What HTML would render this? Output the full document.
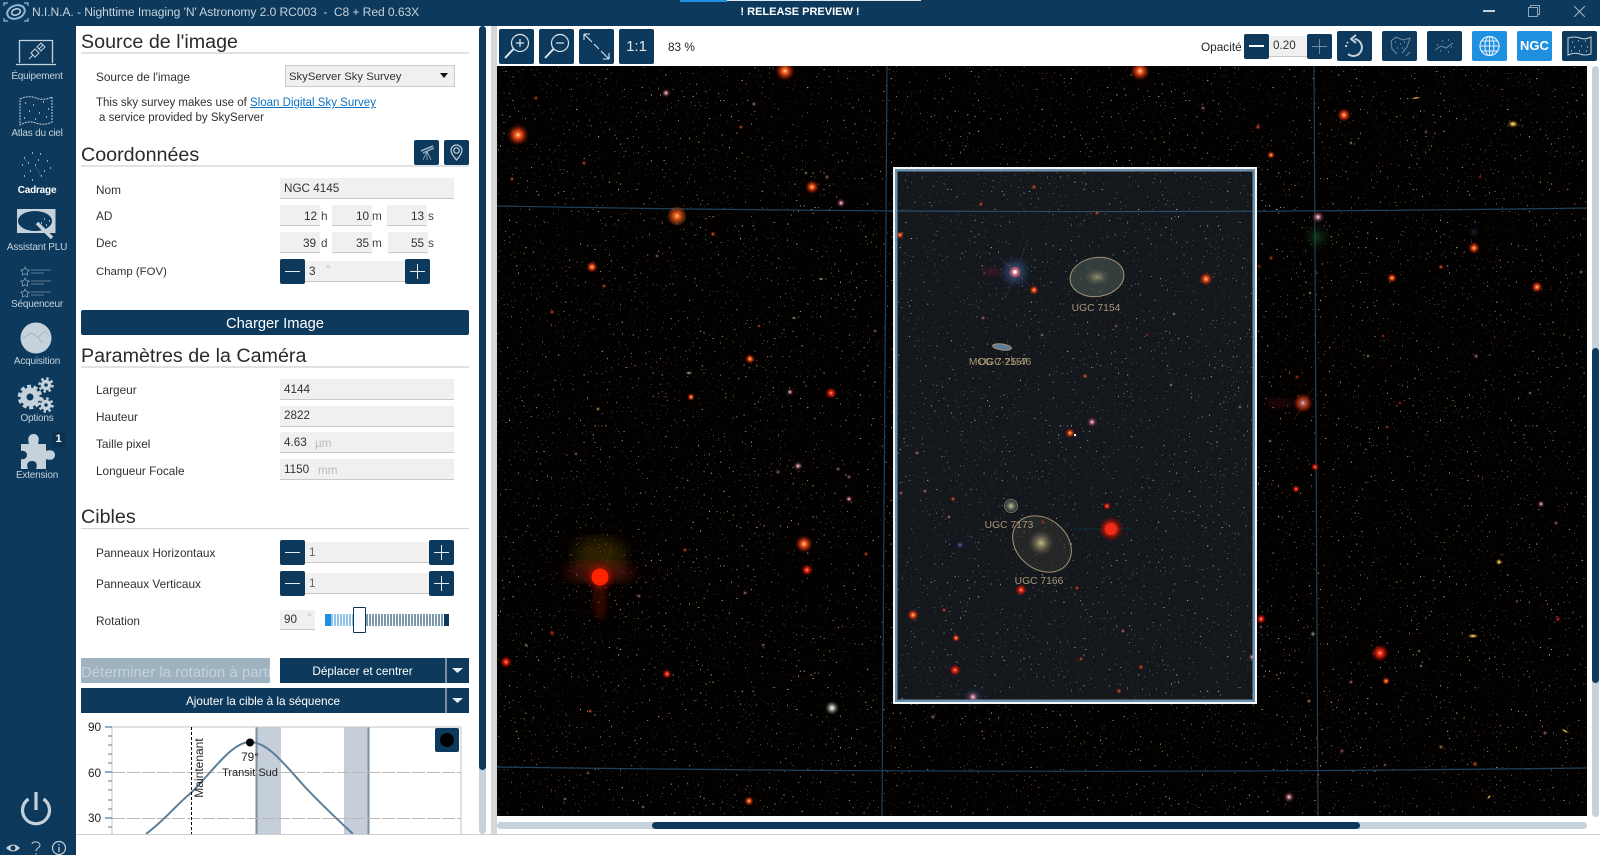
<!DOCTYPE html>
<html lang="fr"><head><meta charset="utf-8"><title>N.I.N.A.</title>
<style>
html,body{margin:0;padding:0;width:1600px;height:855px;overflow:hidden;background:#fff}
body{position:relative;font-family:"Liberation Sans",sans-serif;font-size:11.8px;color:#2a2a2a}
div,span,svg,a{position:absolute;display:block;box-sizing:border-box;white-space:pre}
.d{background:#0d3a5c}
.h{left:81px;font-size:19.7px;line-height:26px;height:26px;color:#2a2a2a;font-weight:400}
.r{left:81px;width:388px;height:2px;background:#e2e2e2}
.l{left:96px;line-height:16px;height:16px;color:#303030}
.i{background:#f0f0f0;border-bottom:1px solid #c8c8c8;line-height:21px;color:#333;padding-left:4px;font-size:11.7px}
.v{line-height:16px;height:16px;color:#333}
.u{line-height:16px;height:16px;color:#444}
.g{color:#bbb}
.b{background:#0d3a5c;border-radius:2px}
.s{width:76px;left:-1px;text-align:center;color:#c5d1db;font-size:10px;line-height:13px;height:13px;letter-spacing:-.2px}
.t{color:#222;line-height:14px;height:14px}
.c{text-align:center}
circle[r="2"],circle[r="2.500"],circle[r="3"],circle[r="1.800"]{opacity:.62}
</style></head><body>

<!-- title bar -->
<div class="d" style="left:0;top:0;width:1600px;height:26px"></div>
<div style="left:680px;top:0;width:47px;height:2px;background:#1f8fe0"></div>
<div style="left:727px;top:0;width:194px;height:1px;background:#dfe6ec"></div>
<svg style="left:2px;top:1px" width="28" height="22" viewBox="0 0 28 22" fill="none" stroke="#c5d1db">
<path d="M2 5V2H6M22 2H26V5M2 17V20H6M22 20H26V17" stroke-width="1"/>
<ellipse cx="14" cy="11" rx="9" ry="6.500" transform="rotate(-20 14 11)" stroke="#8fb8d8" stroke-width="2"/>
<ellipse cx="14" cy="11" rx="4.500" ry="3" transform="rotate(-20 14 11)" stroke="#c5d1db" stroke-width="1.500"/></svg>
<div style="left:32px;top:4px;color:#c5d1db;font-size:12.1px;line-height:16px;letter-spacing:-.08px">N.I.N.A. - Nighttime Imaging 'N' Astronomy 2.0 RC003  -  C8 + Red 0.63X</div>
<div class="c" style="left:700px;top:4px;width:200px;color:#fff;font-size:11px;font-weight:700;line-height:16px">! RELEASE PREVIEW !</div>
<div style="left:1483px;top:10px;width:12px;height:2px;background:#c5d1db"></div>
<svg style="left:1528px;top:5px" width="12" height="12" fill="none" stroke="#8fa6b8"><path d="M.5 2.500H9.500V11.500H.5ZM2.500 2.500V.5H11.500V9.500H9.500"/></svg>
<svg style="left:1574px;top:6px" width="11" height="11" stroke="#a9bac7"><path d="M0 0L11 11M11 0L0 11"/></svg>

<!-- sidebar -->
<div class="d" style="left:0;top:26px;width:76px;height:829px"></div>
<svg style="left:0;top:26px" width="76" height="829" viewBox="0 26 76 829" fill="none" stroke="#c5d1db">
<path d="M19.500 63V40.500H52.500V63M16 64.500H56" stroke-width="1.300"/>
<path d="M29 59L33 55M43 45L39 49M31 53L35 49L39 53L35 57ZM37 47L41 43L45 47L41 51Z" stroke-width="1"/>
<path d="M20 99Q28 95 36 98T52 97V122Q44 126 36 123T20 125Z" stroke-width="1" stroke-dasharray="2 1"/>
<path d="M25 103h1M33 105h1M43 102h1M29 111h1M39 113h1M48 109h1M24 118h1M35 119h1M46 117h1" stroke-width="1.500"/>
<path d="M32 153h1M24 158h1M40 154h1M22 165h1M35 165h1M47 161h1M30 171h1M41 176h1M24 176h1M32 180h1M50 168h1M38 160h1M28 163h1M44 171h1" stroke-width="1.500" stroke="#c5d1db"/>
<path d="M24 158L28 163M35 165L41 176" stroke-width=".4" stroke="#6f8ca2"/>
<rect x="17" y="209" width="38.500" height="24" fill="#c5d1db" stroke="none"/>
<ellipse cx="35" cy="221" rx="17" ry="10" fill="#0d3a5c" stroke="none"/>
<path d="M37 223L52 238" stroke-width="3.500" stroke="#c5d1db"/>
<path d="M41 223h1M46 225h1M49 221h1M44 219h1" stroke-width="1.500"/>
<path d="M25 267l1.300 2.700 3 .4-2.100 2 .5 3-2.700-1.400-2.700 1.400.5-3-2.100-2 3-.4ZM25 278l1.300 2.700 3 .4-2.100 2 .5 3-2.700-1.400-2.700 1.400.5-3-2.100-2 3-.4ZM25 289l1.300 2.700 3 .4-2.100 2 .5 3-2.700-1.400-2.700 1.400.5-3-2.100-2 3-.4Z" stroke-width=".6" stroke="#a9bac7"/>
<path d="M31 270H51M31 273H44M31 281H51M31 284H44M31 292H51M31 295H44" stroke-width=".6" stroke="#a9bac7"/>
<circle cx="36" cy="338" r="15.500" fill="#c5d1db" stroke="none"/>
<path d="M23 338L31 333L38 337L45 331L49 336M38 337L42 343" stroke="#8fa6b8" stroke-width=".6"/>
<circle cx="30" cy="397" r="6.500" stroke-width="6"/><circle cx="30" cy="397" r="10.500" stroke-width="3.500" stroke-dasharray="4 2.600"/>
<circle cx="46" cy="385" r="3.500" stroke-width="3.500"/><circle cx="46" cy="385" r="6.500" stroke-width="2.500" stroke-dasharray="2.500 2.600"/>
<circle cx="46" cy="405" r="3.500" stroke-width="3.500"/><circle cx="46" cy="405" r="6.500" stroke-width="2.500" stroke-dasharray="2.500 2.600"/>
<path d="M21 444H29C27 438 29 434 33.500 434S40 438 38 444H46V451C51 449 55 451 55 455S51 461 46 459V469H36C38 464 36 461 32 461S26 464 28 469H21V459C24 460 27 458 27 455S24 450 21 451Z" fill="#c5d1db" stroke="none"/>
<path d="M28.500 799A13.500 13.500 0 1 0 43.500 799" stroke-width="3.200" stroke="#c5d1db"/><path d="M36 792V810" stroke-width="3.200"/>
<path d="M6 848Q13 841 20 848Q13 855 6 848Z" fill="#c5d1db" stroke="none"/><circle cx="13" cy="848" r="2.500" fill="#0d3a5c" stroke="none" style="opacity:1"/>
<path d="M32 844C32 841 40 841 40 845C40 848 36 848 36 851M36 853V854.500" stroke-width="1"/>
<circle cx="59" cy="848" r="6.500" stroke-width="1.200"/><path d="M59 847V852M59 844V845.500" stroke-width="1.300"/>
</svg>
<div class="s" style="top:70px">Équipement</div>
<div class="s" style="top:127px">Atlas du ciel</div>
<div class="s" style="top:184px;color:#fff;font-weight:700">Cadrage</div>
<div class="s" style="top:241px">Assistant PLU</div>
<div class="s" style="top:298px">Séquenceur</div>
<div class="s" style="top:355px">Acquisition</div>
<div class="s" style="top:412px">Options</div>
<div class="s" style="top:469px">Extension</div>
<div style="left:52px;top:432px;width:13px;height:15px;background:#0a3150;color:#fff;font-weight:700;font-size:11px;line-height:15px;text-align:center">1</div>

<!-- panel -->
<div class="h" style="top:29px">Source de l'image</div>
<div class="r" style="top:52px"></div>
<div class="l" style="top:69px">Source de l'image</div>
<div style="left:285px;top:65px;width:170px;height:22px;background:#f0f0f0;border:1px solid #ccc;line-height:23px;padding-left:3px;color:#333;font-size:11.3px">SkyServer Sky Survey</div>
<svg style="left:439px;top:73px" width="10" height="6"><path d="M1 0H9L5 5Z" fill="#111"/></svg>
<div class="l" style="top:95px;font-size:11.5px">This sky survey makes use of <span style="position:static;display:inline;color:#0b72c4;text-decoration:underline">Sloan Digital Sky Survey</span></div>
<div class="l" style="top:110px;left:99px;font-size:11.5px">a service provided by SkyServer</div>

<div class="h" style="top:142px">Coordonnées</div>
<div class="r" style="top:165px"></div>
<div class="b" style="left:414px;top:140px;width:25px;height:25px"></div>
<svg style="left:414px;top:140px" width="25" height="25" fill="none" stroke="#9fb2bf"><path d="M7 11L19 6M9 13L20 8" stroke-width="1.500"/><path d="M13 11L9 20M13 11V20M13 11L17 20" stroke-width=".8"/></svg>
<div class="b" style="left:444px;top:140px;width:25px;height:25px"></div>
<svg style="left:444px;top:140px" width="25" height="25" fill="none" stroke="#c5d1db" stroke-width="1.200"><path d="M12.500 20C9 16 7 13 7 10.500A5.500 5.500 0 0 1 18 10.500C18 13 16 16 12.500 20Z"/><circle cx="12.500" cy="10.500" r="2.800"/></svg>

<div class="l" style="top:182px">Nom</div>
<div class="i" style="left:280px;top:178px;width:174px;height:21px;line-height:22px">NGC 4145</div>
<div class="l" style="top:208px">AD</div>
<div class="i" style="left:280px;top:205px;width:40px;height:21px"></div><div class="i" style="left:332px;top:205px;width:40px;height:21px"></div><div class="i" style="left:387px;top:205px;width:40px;height:21px"></div>
<div class="v" style="left:304px;top:208px">12</div><div class="u" style="left:321px;top:208px">h</div>
<div class="v" style="left:356px;top:208px">10</div><div class="u" style="left:372px;top:208px">m</div>
<div class="v" style="left:411px;top:208px">13</div><div class="u" style="left:428px;top:208px">s</div>
<div class="l" style="top:235px">Dec</div>
<div class="i" style="left:280px;top:232px;width:40px;height:21px"></div><div class="i" style="left:332px;top:232px;width:40px;height:21px"></div><div class="i" style="left:388px;top:232px;width:40px;height:21px"></div>
<div class="v" style="left:303px;top:235px">39</div><div class="u" style="left:321px;top:235px">d</div>
<div class="v" style="left:356px;top:235px">35</div><div class="u" style="left:372px;top:235px">m</div>
<div class="v" style="left:411px;top:235px">55</div><div class="u" style="left:428px;top:235px">s</div>
<div class="l" style="top:264px;font-size:11.4px">Champ (FOV)</div>
<div class="i" style="left:305px;top:261px;width:100px;height:21px">3<span class="g" style="left:21px;top:-2px">°</span></div>
<div class="b" style="left:280px;top:259px;width:25px;height:25px"></div><div style="left:285px;top:271px;width:15px;height:1px;background:#e6ecf0"></div>
<div class="b" style="left:405px;top:259px;width:25px;height:25px"></div><div style="left:410px;top:271px;width:15px;height:1px;background:#e6ecf0"></div><div style="left:417px;top:264px;width:1px;height:15px;background:#e6ecf0"></div>

<div class="b c" style="left:81px;top:310px;width:388px;height:25px;color:#fff;font-size:14.7px;line-height:29px">Charger Image</div>
<div class="h" style="top:343px">Paramètres de la Caméra</div>
<div class="r" style="top:366px"></div>
<div class="l" style="top:382px">Largeur</div><div class="i" style="left:280px;top:379px;width:174px;height:21px">4144</div>
<div class="l" style="top:409px">Hauteur</div><div class="i" style="left:280px;top:406px;width:174px;height:21px;line-height:19px">2822</div>
<div class="l" style="top:436px">Taille pixel</div><div class="i" style="left:280px;top:432px;width:174px;height:21px">4.63<span class="g" style="left:35px;top:1px">µm</span></div>
<div class="l" style="top:463px">Longueur Focale</div><div class="i" style="left:280px;top:459px;width:174px;height:21px">1150<span class="g" style="left:38px;top:1px">mm</span></div>

<div class="h" style="top:504px">Cibles</div>
<div class="r" style="top:528px;height:1px;background:#d4d4d4"></div>
<div class="l" style="top:545px">Panneaux Horizontaux</div>
<div class="i" style="left:305px;top:542px;width:124px;height:21px;color:#666">1</div>
<div class="b" style="left:280px;top:540px;width:25px;height:25px"></div><div style="left:285px;top:552px;width:15px;height:1px;background:#e6ecf0"></div>
<div class="b" style="left:429px;top:540px;width:25px;height:25px"></div><div style="left:434px;top:552px;width:15px;height:1px;background:#e6ecf0"></div><div style="left:441px;top:545px;width:1px;height:15px;background:#e6ecf0"></div>
<div class="l" style="top:576px">Panneaux Verticaux</div>
<div class="i" style="left:305px;top:573px;width:124px;height:21px;color:#666">1</div>
<div class="b" style="left:280px;top:571px;width:25px;height:25px"></div><div style="left:285px;top:583px;width:15px;height:1px;background:#e6ecf0"></div>
<div class="b" style="left:429px;top:571px;width:25px;height:25px"></div><div style="left:434px;top:583px;width:15px;height:1px;background:#e6ecf0"></div><div style="left:441px;top:576px;width:1px;height:15px;background:#e6ecf0"></div>
<div class="l" style="top:613px">Rotation</div>
<div class="i" style="left:280px;top:610px;width:35px;height:20px;line-height:19px">90<span class="g" style="left:27px;top:-2px">°</span></div>
<div style="left:325px;top:614px;width:6px;height:12px;background:#1f8fe0"></div>
<div style="left:331px;top:614px;width:24px;height:12px;background:repeating-linear-gradient(90deg,#8fc4ea 0 2px,#fff 2px 3px)"></div>
<div style="left:366px;top:614px;width:78px;height:12px;background:repeating-linear-gradient(90deg,#7d97ab 0 2px,#fff 2px 3px)"></div>
<div style="left:444px;top:614px;width:5px;height:12px;background:#0d3a5c"></div>
<div style="left:353px;top:607px;width:13px;height:26px;background:#fff;border:1px solid #0d3a5c;border-radius:1px"></div>

<div style="left:81px;top:658px;width:189px;height:25px;background:#9fb2bf;color:#c5d1db;font-size:15px;line-height:29px;overflow:hidden;border-radius:1px">Déterminer la rotation à partir</div>
<div class="d c" style="left:280px;top:658px;width:165px;height:25px;color:#fff;line-height:27px">Déplacer et centrer</div>
<div class="d" style="left:445px;top:658px;width:24px;height:25px;border-left:2px solid #7d8fa0"></div>
<svg style="left:452px;top:668px" width="12" height="6"><path d="M0 0H11L5.500 5Z" fill="#e6ecf0"/></svg>
<div class="d c" style="left:81px;top:688px;width:364px;height:25px;color:#fff;line-height:27px">Ajouter la cible à la séquence</div>
<div class="d" style="left:445px;top:688px;width:24px;height:25px;border-left:2px solid #7d8fa0"></div>
<svg style="left:452px;top:698px" width="12" height="6"><path d="M0 0H11L5.500 5Z" fill="#e6ecf0"/></svg>

<!-- chart -->
<svg style="left:80px;top:720px" width="390" height="115" viewBox="80 720 390 115" fill="none">
<rect x="256" y="727" width="25" height="107" fill="#c6cfd9"/><rect x="344" y="727" width="25" height="107" fill="#c6cfd9"/>
<rect x="255.500" y="727" width="2" height="107" fill="#7a8fa2"/><rect x="367.500" y="727" width="2" height="107" fill="#7a8fa2"/>
<path d="M112 727H461V834M112 727V834" stroke="#c4c4c4"/>
<path d="M112 772.500H461M112 818.500H461" stroke="#b9b9b9" stroke-dasharray="13 2"/>
<path d="M105 727H112M105 772H112M105 818H112" stroke="#5a7d98" stroke-width="1.200"/>
<path d="M108 736H112M108 745H112M108 754H112M108 763H112M108 781H112M108 790H112M108 800H112M108 809H112M108 827H112" stroke="#5a7d98"/>
<path d="M146 834C165 820 178 803 192 792C212 772 232 742 250 742C268 742 285 765 305 787C320 803 338 820 353 834" stroke="#5a7d98" stroke-width="2"/>
<path d="M191.500 727V834" stroke="#000" stroke-dasharray="3 2"/>
<circle cx="250" cy="742.500" r="4" fill="#000"/>
</svg>
<div style="left:88px;top:720px;line-height:14px;color:#222">90</div>
<div style="left:88px;top:766px;line-height:14px;color:#222">60</div>
<div style="left:88px;top:811px;line-height:14px;color:#222">30</div>
<div class="t" style="left:169px;top:761px;width:60px;text-align:center;transform:rotate(-90deg);font-size:12px">Maintenant</div>
<div class="t c" style="left:220px;top:750px;width:60px">79°</div>
<div class="t c" style="left:215px;top:766px;width:70px;font-size:11px">Transit Sud</div>
<div class="b" style="left:435px;top:728px;width:24px;height:24px"></div><div style="left:440px;top:733px;width:14px;height:14px;background:#000;border-radius:50%"></div>

<!-- panel scrollbar -->
<div style="left:479px;top:26px;width:7px;height:808px;background:#c5d1db;border-radius:4px"></div>
<div style="left:479px;top:26px;width:7px;height:744px;background:#0d3a5c;border-radius:4px"></div>
<div style="left:491px;top:26px;width:6px;height:808px;background:#d6d6d6"></div>

<!-- toolbar -->
<div class="b" style="left:499px;top:29px;width:35px;height:35px"></div>
<svg style="left:499px;top:29px" width="35" height="35" fill="none" stroke="#dfe6ec"><circle cx="21" cy="14" r="8.500" stroke-width="1.200"/><path d="M14.500 20L6 29" stroke-width="2"/><path d="M17 14H25M21 10V18" stroke-width="1.200"/></svg>
<div class="b" style="left:539px;top:29px;width:35px;height:35px"></div>
<svg style="left:539px;top:29px" width="35" height="35" fill="none" stroke="#dfe6ec"><circle cx="21" cy="14" r="8.500" stroke-width="1.200"/><path d="M14.500 20L6 29" stroke-width="2"/><path d="M17 14H25" stroke-width="1.200"/></svg>
<div class="b" style="left:579px;top:29px;width:35px;height:35px"></div>
<svg style="left:579px;top:29px" width="35" height="35" fill="none" stroke="#dfe6ec" stroke-width="1.100"><path d="M5 5L13 13M22 22L30 30M5 5H11M5 5V11M30 30H24M30 30V24M15 15L20 20"/></svg>
<div class="b c" style="left:619px;top:29px;width:35px;height:35px;color:#dfe6ec;font-size:15px;line-height:35px">1:1</div>
<div style="left:668px;top:39px;line-height:16px;color:#222">83 %</div>

<div style="left:1201px;top:39px;line-height:16px;color:#222">Opacité</div>
<div class="i" style="left:1269px;top:36px;width:38px;height:21px;padding-left:4px;line-height:19px">0.20</div>
<div class="b" style="left:1244px;top:34px;width:25px;height:25px"></div><div style="left:1249px;top:45px;width:15px;height:2px;background:#fff"></div>
<div class="b" style="left:1307px;top:34px;width:25px;height:25px"></div><div style="left:1312px;top:46px;width:15px;height:1px;background:#6f8ca2"></div><div style="left:1319px;top:39px;width:1px;height:15px;background:#6f8ca2"></div>
<div class="b" style="left:1337px;top:31px;width:35px;height:30px"></div>
<svg style="left:1337px;top:31px" width="35" height="30" fill="none" stroke="#c5d1db" stroke-width="2"><path d="M17.500 8A8.500 8.500 0 1 1 11 23"/><path d="M19 4L14 8L19 12" stroke-linejoin="round"/><path d="M9 16A8.500 8.500 0 0 1 11 11" stroke-dasharray="2 2"/></svg>
<div class="b" style="left:1382px;top:31px;width:35px;height:30px"></div>
<svg style="left:1382px;top:31px" width="35" height="30" fill="none" stroke="#6f8ca2"><path d="M9 10L14 6L21 9L28 7L25 16L20 22M9 10L10 18L15 23M24 25L28 21"/><path d="M13 11h1M18 13h1M22 11h1M15 17h1M20 17h1" stroke="#a9bac7"/></svg>
<div class="b" style="left:1427px;top:31px;width:35px;height:30px"></div>
<svg style="left:1427px;top:31px" width="35" height="30" fill="none" stroke="#6f8ca2"><path d="M8 19L14 15L19 17L26 12"/><path d="M10 14h1M15 10h1M21 9h1M24 16h1M13 20h1M21 21h1" stroke="#a9bac7"/></svg>
<div style="left:1472px;top:31px;width:35px;height:30px;background:#1f8fe0;border-radius:2px"></div>
<svg style="left:1472px;top:31px" width="35" height="30" fill="none" stroke="#dfeefa"><circle cx="17.500" cy="15" r="9.500" stroke-width="1.200"/><ellipse cx="17.500" cy="15" rx="4.500" ry="9.500"/><path d="M17.500 5.500V24.500M8 15H27M9.500 10H25.500M9.500 20H25.500"/></svg>
<div class="c" style="left:1517px;top:31px;width:35px;height:30px;background:#1f8fe0;border-radius:2px;color:#fff;font-size:13px;font-weight:700;line-height:30px">NGC</div>
<div class="b" style="left:1562px;top:31px;width:35px;height:30px"></div>
<svg style="left:1562px;top:31px" width="35" height="30" fill="none" stroke="#c5d1db"><path d="M6 7Q13 5 18 7T29 6V23Q23 25 18 23T6 24Z"/><path d="M10 11h1M16 10h1M23 10h1M12 16h1M19 15h1M25 16h1M9 20h1M17 20h1M24 20h1" stroke-width="1.200"/></svg>

<!-- sky -->
<svg style="left:0;top:0" width="1600" height="855" viewBox="0 0 1600 855" fill="none">
<defs>
<clipPath id="k"><rect x="497" y="66" width="1090" height="750"/></clipPath>
<filter id="n" x="0" y="0" width="100%" height="100%"><feTurbulence type="fractalNoise" baseFrequency=".55" numOctaves="1" seed="7"/><feColorMatrix values="0 0 0 0 .4 0 0 0 0 .36 0 0 0 0 .32 12 0 0 0 -8.300"/></filter>
<filter id="f"><feGaussianBlur stdDeviation="7"/></filter>
<filter id="f2"><feGaussianBlur stdDeviation="3"/></filter>
<radialGradient id="o"><stop offset="0" stop-color="#ffe0b0"/><stop offset=".2" stop-color="#ff7030"/><stop offset=".5" stop-color="#d8380f" stop-opacity=".75"/><stop offset="1" stop-color="#701000" stop-opacity="0"/></radialGradient>
<radialGradient id="r"><stop offset="0" stop-color="#ffc0b0"/><stop offset=".2" stop-color="#ff3a20"/><stop offset=".55" stop-color="#c81808" stop-opacity=".7"/><stop offset="1" stop-color="#600" stop-opacity="0"/></radialGradient>
<radialGradient id="p"><stop offset="0" stop-color="#f8e8e8"/><stop offset=".22" stop-color="#c08090"/><stop offset=".55" stop-color="#703848" stop-opacity=".55"/><stop offset="1" stop-color="#301018" stop-opacity="0"/></radialGradient>
<radialGradient id="y"><stop offset="0" stop-color="#fff0c0"/><stop offset=".3" stop-color="#c8a040"/><stop offset="1" stop-color="#503000" stop-opacity="0"/></radialGradient>
<radialGradient id="w"><stop offset="0" stop-color="#fff"/><stop offset=".3" stop-color="#a8b0a0"/><stop offset="1" stop-color="#404840" stop-opacity="0"/></radialGradient>
<radialGradient id="g"><stop offset="0" stop-color="#1a6030" stop-opacity=".55"/><stop offset="1" stop-color="#0a3010" stop-opacity="0"/></radialGradient>
<radialGradient id="b"><stop offset="0" stop-color="#6090d0" stop-opacity=".8"/><stop offset="1" stop-color="#103060" stop-opacity="0"/></radialGradient>
<radialGradient id="q"><stop offset="0" stop-color="#fff8d0"/><stop offset=".12" stop-color="#e0d090"/><stop offset=".5" stop-color="#908868" stop-opacity=".7"/><stop offset="1" stop-color="#605840" stop-opacity="0"/></radialGradient>
<radialGradient id="v"><stop offset="0" stop-color="#c8d0a0"/><stop offset=".35" stop-color="#79806a"/><stop offset=".8" stop-color="#454e50" stop-opacity=".75"/><stop offset="1" stop-color="#303840" stop-opacity=".2"/></radialGradient>
</defs>
<g clip-path="url(#k)">
<rect x="497" y="66" width="1090" height="750" fill="#030100"/>
<rect x="497" y="66" width="1090" height="750" filter="url(#n)"/>
<path d="M497 206Q1050 216 1587 208M497 767Q1050 775 1587 768M887 66L882 816M1314 66L1318 816" stroke="#1f415c" stroke-width="1.200"/>

<!-- red star halo -->
<ellipse cx="600" cy="555" rx="26" ry="17" fill="#4a3600" opacity=".6" filter="url(#f)"/>
<ellipse cx="600" cy="572" rx="34" ry="10" fill="#701c08" opacity=".65" filter="url(#f)"/>
<ellipse cx="600" cy="600" rx="7" ry="20" fill="#5a0a04" opacity=".5" filter="url(#f2)"/>
<path d="M612 546L590 608" stroke="#706010" stroke-width=".6" opacity=".3"/>
<circle cx="600" cy="577" r="12" fill="#b01000" opacity=".6" filter="url(#f2)"/>
<circle cx="600" cy="577" r="8.500" fill="#ff2400"/>
<ellipse cx="1317" cy="237" rx="14" ry="14" fill="url(#g)"/>
<circle cx="1474" cy="232" r="6" fill="url(#b)" opacity=".3"/>
<ellipse cx="1280" cy="403" rx="14" ry="5" fill="#601020" opacity=".3" filter="url(#f2)"/>

<g>
<circle cx="1140" cy="71" r="10" fill="url(#o)"/><circle cx="1084" cy="742" r="3" fill="url(#g)"/>
<circle cx="518" cy="135" r="11" fill="url(#o)"/><circle cx="785" cy="71" r="10" fill="url(#o)"/><circle cx="677" cy="216" r="10" fill="url(#o)"/><circle cx="677" cy="216" r="9" fill="#a88010" opacity=".18"/>
<circle cx="812" cy="187" r="7" fill="url(#o)"/><circle cx="841" cy="203" r="5" fill="url(#p)"/><circle cx="666" cy="93" r="5" fill="url(#p)"/>
<circle cx="592" cy="267" r="6" fill="url(#o)"/><circle cx="750" cy="359" r="5" fill="url(#o)"/><circle cx="831" cy="393" r="6" fill="url(#r)"/><circle cx="790" cy="392" r="4" fill="url(#p)"/><circle cx="691" cy="397" r="4" fill="url(#o)"/>
<circle cx="713" cy="234" r="3" fill="url(#o)"/><circle cx="754" cy="104" r="3" fill="url(#p)"/><circle cx="536" cy="98" r="2.500" fill="url(#o)"/><circle cx="512" cy="179" r="2.500" fill="url(#o)"/><circle cx="584" cy="163" r="2.500" fill="url(#o)"/><circle cx="741" cy="127" r="2.500" fill="url(#o)"/><circle cx="827" cy="177" r="3" fill="url(#p)"/><circle cx="806" cy="173" r="2" fill="url(#w)"/><circle cx="604" cy="286" r="2.500" fill="url(#o)"/><circle cx="552" cy="312" r="2.500" fill="url(#o)"/><circle cx="657" cy="256" r="2.500" fill="url(#p)"/><circle cx="759" cy="326" r="2" fill="url(#o)"/><circle cx="875" cy="331" r="2.500" fill="url(#p)"/><circle cx="576" cy="454" r="2.500" fill="url(#p)"/><circle cx="598" cy="409" r="2.500" fill="url(#y)"/>
<ellipse cx="689" cy="373" rx="4" ry="2" fill="url(#w)" opacity=".7"/><ellipse cx="794" cy="318" rx="3" ry="1.500" fill="url(#w)" opacity=".7"/><ellipse cx="821" cy="279" rx="3" ry="1.500" fill="url(#w)" opacity=".8"/>
<circle cx="804" cy="544" r="9" fill="url(#o)"/><circle cx="807" cy="570" r="6" fill="url(#r)"/><circle cx="798" cy="466" r="5" fill="url(#p)"/><circle cx="778" cy="472" r="3" fill="url(#p)"/><circle cx="838" cy="469" r="3" fill="url(#p)"/><circle cx="849" cy="477" r="3" fill="url(#p)"/><circle cx="849" cy="499" r="4" fill="url(#p)"/>
<circle cx="506" cy="662" r="6" fill="url(#r)"/><circle cx="667" cy="674" r="5" fill="url(#r)"/><circle cx="552" cy="633" r="3" fill="url(#r)"/><circle cx="639" cy="596" r="3" fill="url(#p)"/><circle cx="745" cy="593" r="3" fill="url(#p)"/><circle cx="685" cy="550" r="2.500" fill="url(#o)"/><circle cx="590" cy="711" r="2.500" fill="url(#o)"/><circle cx="832" cy="708" r="7" fill="url(#w)"/><circle cx="749" cy="801" r="5" fill="url(#o)"/><circle cx="588" cy="773" r="2.500" fill="url(#p)"/><circle cx="866" cy="554" r="2.500" fill="url(#o)"/><circle cx="763" cy="645" r="2.500" fill="url(#p)"/><circle cx="526" cy="645" r="2" fill="url(#w)"/><circle cx="643" cy="807" r="2" fill="url(#w)"/><circle cx="565" cy="799" r="2" fill="url(#w)"/>
<circle cx="1344" cy="115" r="7" fill="url(#o)"/><circle cx="1318" cy="217" r="7" fill="url(#p)"/><circle cx="1474" cy="248" r="6" fill="url(#o)"/><circle cx="1537" cy="287" r="6" fill="url(#o)"/><circle cx="1392" cy="278" r="5" fill="url(#o)"/><circle cx="1441" cy="267" r="3" fill="url(#o)"/><circle cx="1271" cy="155" r="4" fill="url(#o)"/><circle cx="1258" cy="127" r="3" fill="url(#o)"/><circle cx="1203" cy="108" r="3" fill="url(#p)"/>
<ellipse cx="1513" cy="124" rx="6" ry="4" fill="url(#y)"/><ellipse cx="1416" cy="98" rx="6" ry="1.300" fill="url(#y)" transform="rotate(-8 1416 98)"/>
<circle cx="1426" cy="132" r="2.500" fill="url(#p)"/><circle cx="1476" cy="356" r="3" fill="url(#p)"/><circle cx="1383" cy="336" r="2" fill="url(#r)"/><circle cx="1480" cy="177" r="1.800" fill="url(#r)"/><circle cx="1271" cy="258" r="2.500" fill="url(#o)"/><circle cx="1259" cy="266" r="2" fill="url(#r)"/><circle cx="1297" cy="377" r="2.500" fill="url(#r)"/><circle cx="1400" cy="403" r="2" fill="url(#r)"/><circle cx="1387" cy="427" r="2" fill="url(#o)"/>
<circle cx="1351" cy="143" r="2" fill="url(#w)"/><circle cx="1368" cy="356" r="2" fill="url(#w)"/><circle cx="1310" cy="293" r="2" fill="url(#w)"/><circle cx="1270" cy="441" r="2" fill="url(#w)"/><circle cx="1530" cy="393" r="2" fill="url(#w)"/><circle cx="1581" cy="272" r="2" fill="url(#w)"/>
<circle cx="1303" cy="403" r="10" fill="url(#o)"/><circle cx="1303" cy="403" r="6" fill="url(#p)"/><path d="M1313 388L1294 420" stroke="#a06030" stroke-width=".6" opacity=".4"/>
<circle cx="1315" cy="467" r="4" fill="url(#r)"/><circle cx="1296" cy="489" r="4" fill="url(#r)"/><circle cx="1261" cy="619" r="5" fill="url(#r)"/><circle cx="1261" cy="627" r="2.500" fill="url(#p)"/><circle cx="1252" cy="657" r="4" fill="url(#p)"/><circle cx="1313" cy="634" r="3" fill="url(#w)"/><circle cx="1380" cy="653" r="9" fill="url(#r)"/><circle cx="1351" cy="682" r="3" fill="url(#p)"/><circle cx="1386" cy="681" r="4" fill="url(#o)"/><circle cx="1309" cy="701" r="2.500" fill="url(#y)"/><circle cx="1289" cy="797" r="6" fill="url(#p)"/><circle cx="1342" cy="751" r="3" fill="url(#p)"/><circle cx="1385" cy="765" r="2.500" fill="url(#p)"/><circle cx="1475" cy="764" r="3" fill="url(#o)"/><circle cx="1441" cy="747" r="2.500" fill="url(#y)"/><circle cx="1545" cy="733" r="3" fill="url(#p)"/><circle cx="1541" cy="504" r="4" fill="url(#p)"/><circle cx="1556" cy="523" r="3" fill="url(#p)"/><circle cx="1558" cy="619" r="3" fill="url(#r)"/><circle cx="1499" cy="562" r="3.500" fill="url(#y)"/>
<ellipse cx="1473" cy="636" rx="6" ry="2.500" fill="url(#y)"/><ellipse cx="1565" cy="731" rx="5" ry="1.500" transform="rotate(30 1565 731)" fill="url(#y)"/><ellipse cx="1489" cy="797" rx="3" ry="1.500" transform="rotate(-50 1489 797)" fill="url(#y)"/>
<circle cx="1517" cy="601" r="2" fill="url(#p)"/><circle cx="1419" cy="651" r="2" fill="url(#w)"/><circle cx="1421" cy="666" r="2" fill="url(#w)"/>
</g>

<!-- frame content -->
<rect x="895" y="170" width="360" height="531" fill="#6d8db0" opacity=".16"/>
<circle cx="1015" cy="272" r="17" fill="url(#b)"/><ellipse cx="992" cy="272" rx="10" ry="4" fill="#6a1a28" opacity=".4" filter="url(#f2)"/>
<path d="M1028 240L1005 300M1000 258L1030 286" stroke="#a06880" stroke-width=".6" opacity=".3"/>
<circle cx="1015" cy="272" r="8" fill="url(#p)"/><circle cx="1015" cy="272" r="5" fill="#f07090" opacity=".55"/><circle cx="1015" cy="272" r="2" fill="#fff" style="opacity:.9"/>
<circle cx="1034" cy="290" r="5" fill="url(#o)"/><circle cx="1206" cy="279" r="7" fill="url(#o)"/><circle cx="900" cy="235" r="4" fill="url(#o)"/><circle cx="1034" cy="187" r="3" fill="url(#o)"/><circle cx="981" cy="204" r="2.500" fill="url(#o)"/><circle cx="1097" cy="213" r="2.500" fill="url(#o)"/><circle cx="983" cy="318" r="3" fill="url(#p)"/><circle cx="1085" cy="376" r="3" fill="url(#o)"/><circle cx="1092" cy="422" r="6" fill="url(#p)"/><circle cx="1070" cy="433" r="5" fill="url(#o)"/><rect x="1074" y="434" width="2" height="2" fill="#fff"/><circle cx="916" cy="289" r="2.500" fill="url(#g)"/><circle cx="1042" cy="335" r="2" fill="url(#w)"/><circle cx="1116" cy="326" r="2.500" fill="url(#p)"/><circle cx="917" cy="453" r="3" fill="url(#p)"/>
<circle cx="1171" cy="385" r="2" fill="url(#w)"/><circle cx="1174" cy="314" r="2" fill="url(#w)"/><circle cx="1240" cy="407" r="2" fill="url(#w)"/><circle cx="1147" cy="335" r="1.800" fill="url(#r)"/>
<ellipse cx="1097" cy="277" rx="27" ry="19.500" transform="rotate(-8 1097 277)" fill="#4a5c58" opacity=".55"/>
<ellipse cx="1097" cy="277" rx="14" ry="9" fill="url(#q)" opacity=".45"/>
<ellipse cx="1097" cy="277" rx="27" ry="19.500" transform="rotate(-8 1097 277)" stroke="#a49477"/>
<ellipse cx="1002" cy="347" rx="9.500" ry="3" transform="rotate(8 1002 347)" fill="#5d7c9a" stroke="#a49477" stroke-width="1"/>
<circle cx="1107" cy="506" r="4" fill="url(#r)"/><circle cx="1043" cy="522" r="3" fill="url(#r)"/><circle cx="1021" cy="590" r="6" fill="url(#r)"/><circle cx="913" cy="615" r="6" fill="url(#o)"/><circle cx="956" cy="638" r="4" fill="url(#o)"/><circle cx="955" cy="670" r="6" fill="url(#r)"/>
<circle cx="973" cy="697" r="11" fill="url(#b)" opacity=".6"/><circle cx="973" cy="697" r="7" fill="url(#p)"/><circle cx="933" cy="717" r="3" fill="url(#p)"/>
<circle cx="901" cy="493" r="3" fill="url(#p)"/><circle cx="925" cy="491" r="3" fill="url(#p)"/><circle cx="953" cy="499" r="3" fill="url(#o)"/><circle cx="949" cy="517" r="3" fill="url(#p)"/><circle cx="1123" cy="631" r="3" fill="url(#p)"/><circle cx="1141" cy="667" r="3" fill="url(#o)"/><circle cx="1119" cy="691" r="3" fill="url(#o)"/><circle cx="1077" cy="588" r="2.500" fill="url(#o)"/><circle cx="1081" cy="659" r="2.500" fill="url(#o)"/><circle cx="960" cy="545" r="4" fill="url(#b)"/><circle cx="944" cy="610" r="2.500" fill="url(#o)"/><circle cx="1061" cy="651" r="2.500" fill="url(#g)"/>
<path d="M1073 529H1133" stroke="#0c2a30" stroke-width="1.500"/>
<circle cx="1111" cy="529" r="13" fill="url(#r)"/><circle cx="1111" cy="529" r="6" fill="#f02a18"/>
<circle cx="1011" cy="506" r="6.500" fill="url(#v)" stroke="#6e7060"/>
<ellipse cx="1042" cy="544" rx="32" ry="25" transform="rotate(40 1042 544)" fill="#3a3a34" opacity=".45"/>
<ellipse cx="1041" cy="543" rx="13" ry="13" fill="url(#q)" opacity=".7"/>
<ellipse cx="1042" cy="544" rx="32" ry="25" transform="rotate(40 1042 544)" stroke="#a49477"/>
<g font-family="Liberation Sans,sans-serif" font-size="10.3" fill="#a89878" text-anchor="middle">
<text x="1096" y="311">UGC 7154</text>
<text x="1000" y="365">MCG 7-25-46</text>
<text x="1003" y="365">UGC 7157</text>
<text x="1009" y="528">UGC 7173</text>
<text x="1039" y="584">UGC 7166</text>
</g>
</g>
<rect x="896" y="170" width="358" height="531" stroke="#6d90ab" stroke-width="3"/>
<rect x="894" y="168" width="362" height="535" stroke="#f4f7f9" stroke-width="2"/>
</svg>

<!-- scrollbars -->
<div style="left:497px;top:822px;width:1090px;height:7px;background:#c5d1db;border-radius:4px"></div>
<div style="left:652px;top:822px;width:708px;height:7px;background:#0d3a5c;border-radius:4px"></div>
<div style="left:1592px;top:66px;width:7px;height:751px;background:#c5d1db;border-radius:4px"></div>
<div style="left:1592px;top:348px;width:7px;height:335px;background:#0d3a5c;border-radius:4px"></div>
<div style="left:76px;top:834px;width:1524px;height:1px;background:#cfcfcf"></div>
</body></html>
